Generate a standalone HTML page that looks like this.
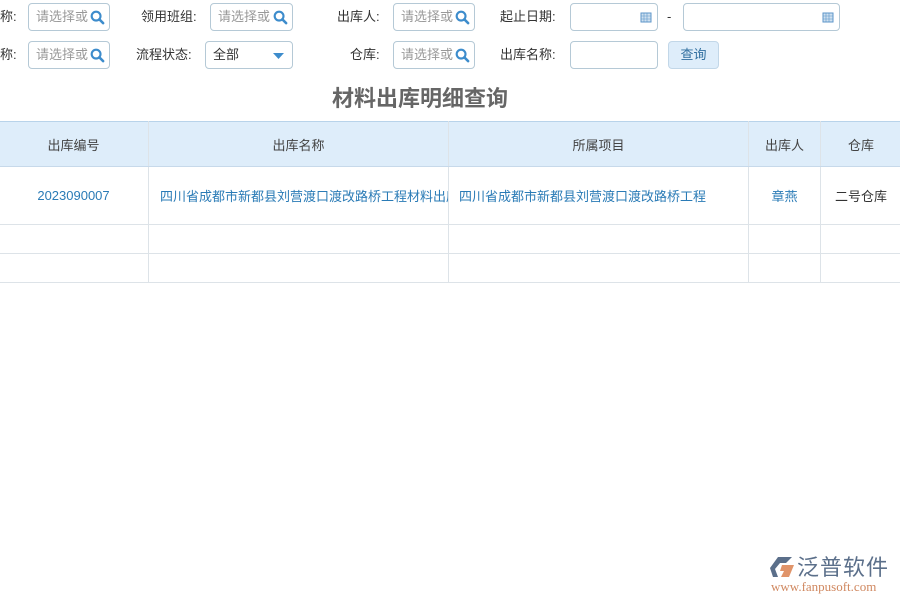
<!DOCTYPE html>
<html><head><meta charset="utf-8"><style>
*{margin:0;padding:0;box-sizing:border-box}
body{width:900px;height:600px;background:#fff;font-family:"Liberation Sans","Noto Sans CJK SC",sans-serif;font-size:13px;color:#333;position:relative;overflow:hidden}
.a{position:absolute}
.lbl{position:absolute;font-size:13px;color:#333;line-height:16px}
.inp{position:absolute;height:28px;border:1px solid #b5c9d6;border-radius:4px;background:#fff;color:#999;font-size:13px;line-height:26px;padding-left:7px;overflow:hidden;white-space:nowrap}
.srch{position:absolute;right:4px;top:6px;width:15px;height:15px}
table{position:absolute;left:-2px;top:121px;border-collapse:collapse;table-layout:fixed;width:903px}
td,th{border:1px solid #dde3e8;text-align:center;font-weight:normal;font-size:13px;overflow:hidden;white-space:nowrap}
th{background:#deedfa;color:#444;height:45px;border-top:1px solid #b8d3ea;border-bottom:1px solid #c7d9ea}
td{color:#2a7bb6}
</style></head><body>
<div class="lbl" style="left:0;top:9px">称:</div>
<div class="inp" style="left:28px;top:3px;width:82px">请选择或<svg class="srch" viewBox="0 0 16 16"><circle cx="6.5" cy="6.5" r="4.7" fill="none" stroke="#3d8ccc" stroke-width="2.3"/><path d="M10 10l4 4" stroke="#3d8ccc" stroke-width="2.8" stroke-linecap="round"/></svg></div>
<div class="lbl" style="left:141px;top:9px">领用班组:</div>
<div class="inp" style="left:210px;top:3px;width:83px">请选择或<svg class="srch" viewBox="0 0 16 16"><circle cx="6.5" cy="6.5" r="4.7" fill="none" stroke="#3d8ccc" stroke-width="2.3"/><path d="M10 10l4 4" stroke="#3d8ccc" stroke-width="2.8" stroke-linecap="round"/></svg></div>
<div class="lbl" style="left:337px;top:9px">出库人:</div>
<div class="inp" style="left:393px;top:3px;width:82px">请选择或<svg class="srch" viewBox="0 0 16 16"><circle cx="6.5" cy="6.5" r="4.7" fill="none" stroke="#3d8ccc" stroke-width="2.3"/><path d="M10 10l4 4" stroke="#3d8ccc" stroke-width="2.8" stroke-linecap="round"/></svg></div>
<div class="lbl" style="left:500px;top:9px">起止日期:</div>
<div class="inp" style="left:570px;top:3px;width:88px"><svg class="a" style="right:5px;top:7px" width="12" height="12" viewBox="0 0 12 12"><rect x="1" y="2" width="10" height="9" fill="#cfe0f0" stroke="#5d96c9"/><path d="M1 5h10M4 2v9M7 2v9M1 8h10" stroke="#5d96c9" stroke-width=".6"/></svg></div>
<div class="lbl" style="left:667px;top:9px">-</div>
<div class="inp" style="left:683px;top:3px;width:157px"><svg class="a" style="right:5px;top:7px" width="12" height="12" viewBox="0 0 12 12"><rect x="1" y="2" width="10" height="9" fill="#cfe0f0" stroke="#5d96c9"/><path d="M1 5h10M4 2v9M7 2v9M1 8h10" stroke="#5d96c9" stroke-width=".6"/></svg></div>

<div class="lbl" style="left:0;top:47px">称:</div>
<div class="inp" style="left:28px;top:41px;width:82px">请选择或<svg class="srch" viewBox="0 0 16 16"><circle cx="6.5" cy="6.5" r="4.7" fill="none" stroke="#3d8ccc" stroke-width="2.3"/><path d="M10 10l4 4" stroke="#3d8ccc" stroke-width="2.8" stroke-linecap="round"/></svg></div>
<div class="lbl" style="left:136px;top:47px">流程状态:</div>
<div class="inp" style="left:205px;top:41px;width:88px;color:#333">全部<svg class="a" style="right:8px;top:11px" width="11" height="6"><path d="M0 0h11L5.5 6z" fill="#3d8ccc"/></svg></div>
<div class="lbl" style="left:350px;top:47px">仓库:</div>
<div class="inp" style="left:393px;top:41px;width:82px">请选择或<svg class="srch" viewBox="0 0 16 16"><circle cx="6.5" cy="6.5" r="4.7" fill="none" stroke="#3d8ccc" stroke-width="2.3"/><path d="M10 10l4 4" stroke="#3d8ccc" stroke-width="2.8" stroke-linecap="round"/></svg></div>
<div class="lbl" style="left:500px;top:47px">出库名称:</div>
<div class="inp" style="left:570px;top:41px;width:88px"></div>
<div class="a" style="left:668px;top:41px;width:51px;height:28px;background:#deedfa;border:1px solid #c2d7e8;border-radius:4px;text-align:center;line-height:26px;color:#2f6e9f">查询</div>

<div class="a" style="left:0;width:840px;top:81px;text-align:center;font-size:22px;font-weight:bold;color:#666">材料出库明细查询</div>

<table>
<colgroup><col style="width:150px"><col style="width:300px"><col style="width:300px"><col style="width:72px"><col style="width:81px"></colgroup>
<tr><th>出库编号</th><th>出库名称</th><th>所属项目</th><th>出库人</th><th>仓库</th></tr>
<tr style="height:58px"><td>2023090007</td><td style="text-align:left;padding-left:11px">四川省成都市新都县刘营渡口渡改路桥工程材料出库</td><td style="text-align:left;padding-left:10px">四川省成都市新都县刘营渡口渡改路桥工程</td><td>章燕</td><td style="color:#333">二号仓库</td></tr>
<tr style="height:29px"><td></td><td></td><td></td><td></td><td></td></tr>
<tr style="height:29px"><td></td><td></td><td></td><td></td><td></td></tr>
</table>

<svg class="a" style="left:770px;top:556px" width="26" height="22" viewBox="0 0 26 22"><path d="M8 1h14l-6 6H10L5 13l3 8H3L0 12z" fill="#5b6f8a"/><path d="M12 9h12l-5 12h-8l3-6h-4z" fill="#e0946a"/></svg>
<div class="a" style="left:797px;top:555px;font-size:22px;line-height:26px;color:#5b6f8a;letter-spacing:1px">泛普软件</div>
<div class="a" style="left:771px;top:580px;font-family:'Liberation Serif',serif;font-size:13px;line-height:14px;color:#d08860">www.fanpusoft.com</div>
</body></html>
